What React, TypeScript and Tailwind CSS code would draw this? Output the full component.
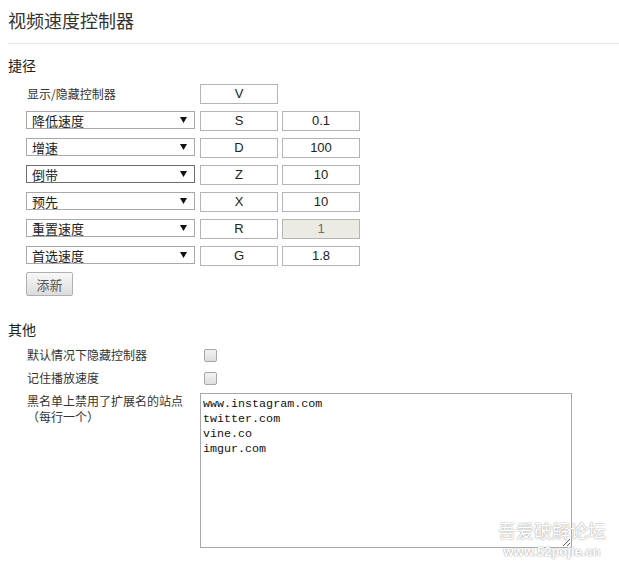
import React from 'react';

const shortcuts = [
  { action: '降低速度', key: 'S', value: '0.1' },
  { action: '增速', key: 'D', value: '100' },
  { action: '倒带', key: 'Z', value: '10', focused: true },
  { action: '预先', key: 'X', value: '10' },
  { action: '重置速度', key: 'R', value: '1', disabled: true },
  { action: '首选速度', key: 'G', value: '1.8' },
];

const boxClass =
  "w-[78px] h-[20px] border border-[#b4b4b4] bg-white flex items-center justify-center text-[13px] text-[#222] font-['Liberation_Sans',sans-serif]";

const FakeSelect = ({ label, focused }: { label: string; focused?: boolean }) => (
  <div
    className={`w-[169px] h-[18px] border ${
      focused ? 'border-[#6e6e6e]' : 'border-[#a9a9a9]'
    } bg-white flex items-center justify-between pl-[5px] pr-[7px] text-[13px] leading-[16px] text-[#222]`}
  >
    <span className="pt-[2px]">{label}</span>
    <svg width="7" height="6" viewBox="0 0 7 6">
      <polygon points="0,0 7,0 3.5,6" fill="#111" />
    </svg>
  </div>
);

export default function App() {
  return (
    <div className="relative h-[566px] w-[619px] overflow-hidden bg-white text-[#333] font-['Noto_Sans_CJK_SC','Liberation_Sans',sans-serif]">
      <div className="pl-[8px]">
        {/* Title */}
        <div className="h-[44px] pt-[8px] border-b border-[#e6e6e6]">
          <h1 className="text-[18px] leading-[24px] font-normal text-[#333]">视频速度控制器</h1>
        </div>

        {/* Shortcuts */}
        <h2 className="mt-[11px] text-[14px] leading-[20px] font-normal text-[#222]">捷径</h2>
        <div className="mt-[9px] pl-[18px] flex flex-col gap-[7px]">
          <div className="flex items-center h-[20px]">
            <div className="w-[174px] pl-[1px] text-[12px] text-[#333]">显示/隐藏控制器</div>
            <div className={boxClass}>V</div>
          </div>
          {shortcuts.map((s) => (
            <div key={s.key} className="flex items-start h-[20px]">
              <FakeSelect label={s.action} focused={s.focused} />
              <div className="w-[5px]" />
              <div className={boxClass}>{s.key}</div>
              <div
                className={`ml-[4px] w-[78px] h-[20px] border border-[#b4b4b4] flex items-center justify-center text-[13px] font-['Liberation_Sans',sans-serif] ${
                  s.disabled ? 'bg-[#ebebe4] text-[#6d6d6d]' : 'bg-white text-[#222]'
                }`}
              >
                {s.value}
              </div>
            </div>
          ))}
          <button className="mt-[-1px] w-[47px] h-[24px] rounded-[2px] border border-[#b0b0b0] bg-gradient-to-b from-[#f8f8f8] to-[#dcdcdc] text-[13px] text-[#555] leading-none">
            添新
          </button>
        </div>

        {/* Other */}
        <h2 className="mt-[23px] text-[14px] leading-[20px] font-normal text-[#222]">其他</h2>
        <div className="mt-[6px] pl-[18px] flex flex-col gap-[3px]">
          {['默认情况下隐藏控制器', '记住播放速度'].map((t) => (
            <div key={t} className="flex items-center h-[20px]">
              <div className="w-[174px] pl-[1px] text-[12px] text-[#333]">{t}</div>
              <div className="ml-[4px] w-[13px] h-[13px] rounded-[2px] border border-[#a6a6a6] bg-gradient-to-b from-[#f2f2f2] to-[#dedede]" />
            </div>
          ))}
          <div className="mt-[2px] flex items-start">
            <div className="w-[174px] pl-[1px] text-[12px] leading-[16px] text-[#333]">
              黑名单上禁用了扩展名的站点
              <br />
              （每行一个）
            </div>
            <textarea
              readOnly
              className="w-[372px] h-[155px] border border-[#a9a9a9] px-[2px] pt-[3px] text-[11.7px] leading-[15px] text-[#111] font-['Liberation_Mono',monospace] resize-y outline-none"
              value={'www.instagram.com\ntwitter.com\nvine.co\nimgur.com'}
            />
          </div>
        </div>
      </div>

      {/* Watermark */}
      <div className="absolute left-[498px] top-[520px] flex flex-col items-center gap-[5px] text-white [text-shadow:0_0_1px_#999,0_0_2px_#bbb]">
        <span className="text-[18px] leading-[20px]">吾爱破解论坛</span>
        <span className="text-[13px] leading-[13px] font-bold font-['Liberation_Sans',sans-serif]">www.52pojie.cn</span>
      </div>
    </div>
  );
}
